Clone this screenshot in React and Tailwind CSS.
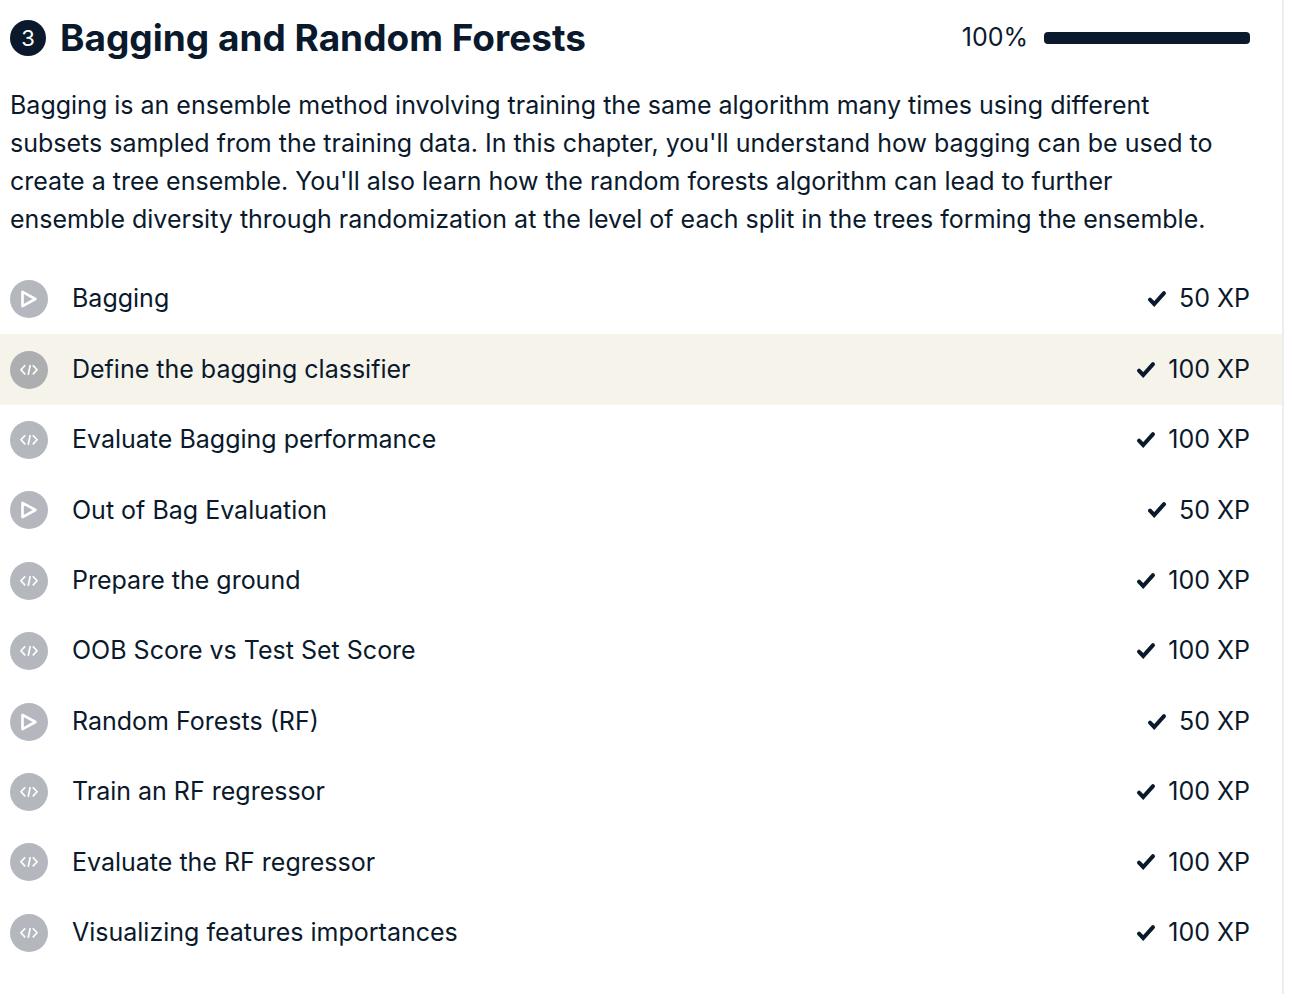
const lessons = [
  { title: "Bagging", xp: 50, video: true },
  { title: "Define the bagging classifier", xp: 100, active: true },
  { title: "Evaluate Bagging performance", xp: 100 },
  { title: "Out of Bag Evaluation", xp: 50, video: true },
  { title: "Prepare the ground", xp: 100 },
  { title: "OOB Score vs Test Set Score", xp: 100 },
  { title: "Random Forests (RF)", xp: 50, video: true },
  { title: "Train an RF regressor", xp: 100 },
  { title: "Evaluate the RF regressor", xp: 100 },
  { title: "Visualizing features importances", xp: 100 },
];

const description = [
  "Bagging is an ensemble method involving training the same algorithm many times using different",
  "subsets sampled from the training data. In this chapter, you'll understand how bagging can be used to",
  "create a tree ensemble. You'll also learn how the random forests algorithm can lead to further",
  "ensemble diversity through randomization at the level of each split in the trees forming the ensemble.",
];

function LessonIcon({ video, active }) {
  return (
    <svg viewBox="0 0 38 38" className="size-[38px] shrink-0" fill="none" aria-hidden="true">
      <circle cx="19" cy="19" r="19" fill={active ? "#adaeb0" : "#b4b7be"} />
      {video ? (
        <path d="M12.5 11.9v14.2L25.4 19Z" stroke="#fff" strokeWidth="2.6" strokeLinejoin="round" />
      ) : (
        <path
          d="M15.2 14.2 11 18.8l4.2 4.6M22.8 14.2 27 18.8l-4.2 4.6M20.2 14.2l-2 9.6"
          stroke="#fff"
          strokeWidth="1.7"
        />
      )}
    </svg>
  );
}

function Check() {
  return (
    <svg viewBox="0 0 20 18" className="h-[18px] w-5 shrink-0" fill="none" aria-hidden="true">
      <path d="m3 9.6 4.2 4.4L17 3.2" stroke="#0a192b" strokeWidth="4" strokeLinecap="round" strokeLinejoin="miter" />
    </svg>
  );
}

export default function App() {
  return (
    <main className="mr-1.5 min-h-screen border-r-2 border-[#ededf0] bg-white pb-6 font-['Inter',sans-serif] text-[25px] text-[#0a192b]">
      <header className="flex items-center justify-between pt-4 pr-8 pl-2.5">
        <div className="flex items-center gap-3.5">
          <span className="flex size-9 items-center justify-center rounded-full bg-[#0a192b] text-[22px] text-white">3</span>
          <h1 className="text-[37px] leading-[44px] font-bold">Bagging and Random Forests</h1>
        </div>
        <div className="flex items-center gap-4">
          <span id="chapter-progress">100%</span>
          <div
            role="progressbar"
            aria-labelledby="chapter-progress"
            aria-valuenow={100}
            className="h-3 w-[206px] rounded-[4px] bg-[#0a192b]"
          />
        </div>
      </header>
      <p className="mt-[26px] pl-2.5 leading-[38px]">
        {description.map((line) => (
          <span key={line} className="block">{line} </span>
        ))}
      </p>
      <ul className="mt-[26px] grid min-h-[704px] auto-rows-fr">
        {lessons.map(({ title, xp, video, active }) => (
          <li key={title} className={active ? "bg-[#f6f3eb]" : ""}>
            <a href="#" className="flex h-full items-center pr-8 pl-2.5">
              <LessonIcon video={video} active={active} />
              <span className="ml-6 grow">{title}</span>
              <span className="flex items-center gap-3">
                <Check />
                {xp} XP
              </span>
            </a>
          </li>
        ))}
      </ul>
    </main>
  );
}
